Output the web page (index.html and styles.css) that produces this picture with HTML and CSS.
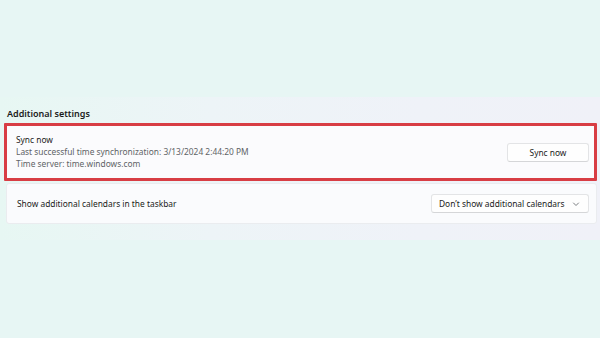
FILE: index.html
```html
<!DOCTYPE html>
<html lang="en">
<head>
    <meta charset="UTF-8">
    <meta name="viewport" content="width=device-width, initial-scale=1.0">
    <title>Date &amp; time</title>
    <link rel="stylesheet" href="styles.css">
</head>
<body>
    <div class="panel">
        <h2 class="section-title">Additional settings</h2>

        <div class="highlight">
            <div class="card card-sync">
                <div class="card-text">
                    <div class="card-label">Sync now</div>
                    <div class="card-desc">Last successful time synchronization: 3/13/2024 2:44:20 PM</div>
                    <div class="card-desc">Time server: time.windows.com</div>
                </div>
                <button class="btn">Sync now</button>
            </div>
        </div>

        <div class="card card-calendar">
            <div class="card-label">Show additional calendars in the taskbar</div>
            <div class="dropdown">
                <span>Don’t show additional calendars</span>
                <svg class="chevron" width="8" height="8" viewBox="0 0 8 8">
                    <path d="M1.5 3 L4 5.5 L6.5 3" fill="none" stroke="#6b6e73" stroke-width="0.9" stroke-linecap="round" stroke-linejoin="round"/>
                </svg>
            </div>
        </div>
    </div>
</body>
</html>
```

FILE: styles.css
```css
/* General Reset */
* {
    margin: 0;
    padding: 0;
    box-sizing: border-box;
    font-family: "Noto Sans", "Open Sans", sans-serif;
}

body {
    background: #e7f6f4;
    color: #1b1b1b;
    height: 338px;
    overflow: hidden;
    padding-top: 97px;
}

.panel {
    height: 143px;
    background: linear-gradient(90deg, #e7f7f3 0%, #edf4f7 35%, #eff2f8 70%, #f0f1f8 100%);
    padding: 10px 3px 0 4px;
}

.section-title {
    font-size: 9px;
    font-weight: 600;
    color: #1a1a1a;
    padding-left: 3px;
    height: 16px;
    line-height: 14px;
}

.highlight {
    border: 3px solid #d83d44;
    border-radius: 1px;
}

.card {
    background: #fbfbfd;
    display: flex;
    align-items: center;
    justify-content: space-between;
}

.card-sync {
    height: 52px;
    padding: 0 5px 0 9px;
}

.card-calendar {
    height: 41px;
    margin: 2px 0 0 2px;
    padding: 0 7px 0 10px;
    border: 1px solid #eaecef;
    border-radius: 3px;
    background: #fafbfd;
}

.card-label {
    font-size: 8.4px;
    color: #1b1b1b;
    line-height: 12px;
}

.card-desc {
    font-size: 8.4px;
    color: #606366;
    line-height: 12px;
}

.btn {
    width: 82px;
    height: 19px;
    background: #fefefe;
    border: 1px solid #e3e4e6;
    border-bottom-color: #d5d6d8;
    border-radius: 3px;
    font-size: 8.4px;
    color: #1b1b1b;
}

.dropdown {
    width: 158px;
    height: 19px;
    background: #fefefe;
    border: 1px solid #e3e4e6;
    border-bottom-color: #d5d6d8;
    border-radius: 3px;
    font-size: 8.4px;
    color: #1b1b1b;
    display: flex;
    align-items: center;
    justify-content: space-between;
    padding: 0 8px 0 7px;
}

.chevron {
    display: block;
}
```
